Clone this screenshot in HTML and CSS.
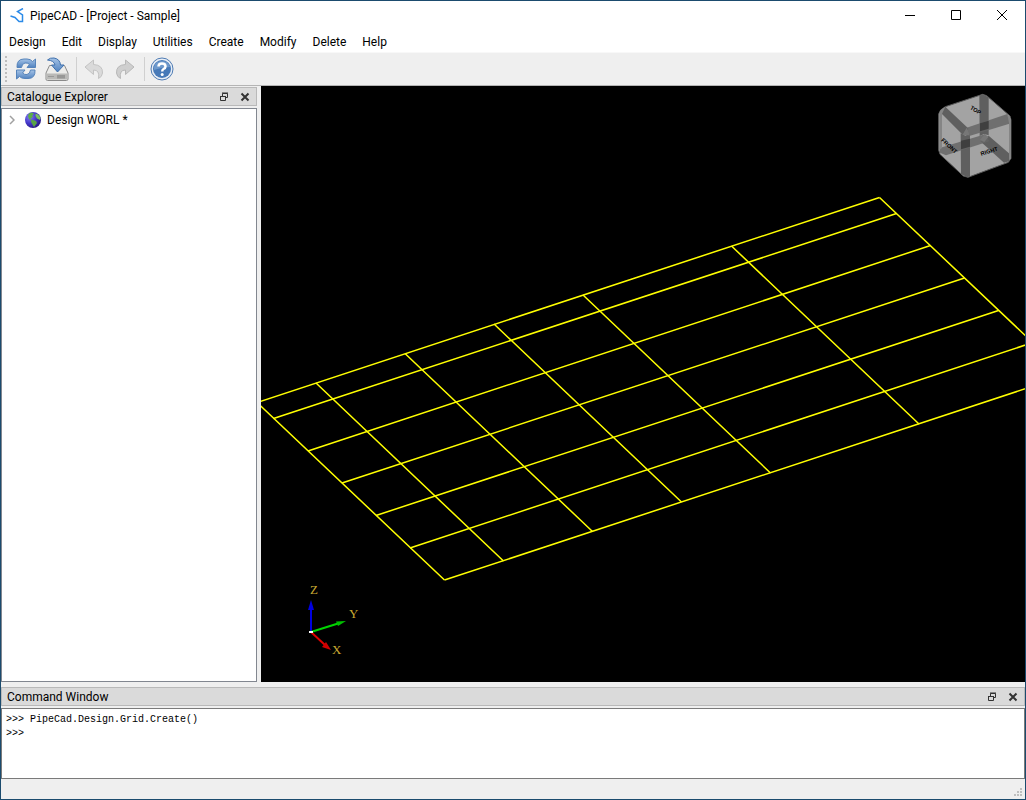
FILE: index.html
```html
<!DOCTYPE html>
<html lang="en">
  <head>
    <meta charset="utf-8" />
    <meta name="viewport" content="width=device-width, initial-scale=1" />
    <title>PipeCAD - [Project - Sample]</title>
    <link rel="stylesheet" href="styles.css">
  </head>
  <body>
    <div class="window">
      <header class="title-bar">
        <svg class="app-logo" width="16" height="16" viewBox="0 0 16 16">
          <path d="M14 0.500L8.500 3.500L13.500 7V13.500H10L6 9.500L1.500 8" fill="none" stroke="#2b8ae8" stroke-width="1.500" />
        </svg>
        <h1 class="title">PipeCAD - [Project - Sample]</h1>
        <button class="window-button" aria-label="Minimize">
          <svg width="12" height="12" viewBox="0 0 12 12"><path d="M1 5.500H11" /></svg>
        </button>
        <button class="window-button" aria-label="Maximize">
          <svg width="12" height="12" viewBox="0 0 12 12"><path d="M1.500 0.500H10.500V9.500H1.500Z" /></svg>
        </button>
        <button class="window-button" aria-label="Close">
          <svg width="12" height="12" viewBox="0 0 12 12"><path d="M1 0L11 10M11 0L1 10" /></svg>
        </button>
      </header>

      <nav class="menu-bar">
        <button>Design</button>
        <button>Edit</button>
        <button>Display</button>
        <button>Utilities</button>
        <button>Create</button>
        <button>Modify</button>
        <button>Delete</button>
        <button>Help</button>
      </nav>

      <div class="tool-bar">
        <span class="grip"></span>
        <button aria-label="Refresh">
          <svg width="24" height="24" viewBox="0 0 24 24">
            <defs>
              <linearGradient id="blue" x1="0" y1="0" x2="0" y2="1">
                <stop offset="0" stop-color="#a5c3e6" />
                <stop offset="1" stop-color="#4f81bf" />
              </linearGradient>
            </defs>
            <path d="M3 10.500Q2.500 2 10 2H13Q16.500 2 18.500 4.500L21.500 2V10.500H13L15.500 7.500Q13.500 5.500 11 6Q8 6.500 7.500 10.500Z" fill="url(#blue)" stroke="#5583ba" />
            <path d="M21 13Q21.500 21.500 14 21.500H11Q7.500 21.500 5.500 19.500L2.500 22V13H11L8.500 16Q10.500 18 13 17.500Q16 17 16.500 13Z" fill="url(#blue)" stroke="#5583ba" />
          </svg>
        </button>
        <button aria-label="Save">
          <svg width="24" height="24" viewBox="0 0 24 24">
            <path d="M4.500 8.500H19.500L23 16V22Q23 23.500 21.500 23.500H2.500Q1 23.500 1 22V16Z" fill="#ececea" stroke="#8a8a8a" />
            <path d="M1.500 16.500H22.500V22.500H1.500Z" fill="#b9b9b7" />
            <path d="M13 18V21.500M15 18V21.500M17 18V21.500M19 18V21.500" stroke="#777" />
            <path d="M3 19.500H9" stroke="#999" />
            <path d="M2.500 3Q5 0.500 9 1Q15 2 15.500 8H19L12.500 15L6.500 8H10Q9 3.500 2.500 3Z" fill="url(#blue)" stroke="#3f70ad" />
          </svg>
        </button>
        <span class="separator"></span>
        <button aria-label="Undo" disabled>
          <svg width="24" height="24" viewBox="0 0 24 24">
            <path d="M3 10L11.500 3V7.500Q21 8 20.500 16Q20 20 16.500 21.500Q18 13 11.500 13V17.500Z" fill="#dadada" stroke="#c3c3c3" />
          </svg>
        </button>
        <button aria-label="Redo" disabled>
          <svg width="24" height="24" viewBox="0 0 24 24">
            <path d="M21 10L12.500 3V7.500Q3 8 3.500 16Q4 20 7.500 21.500Q6 13 12.500 13V17.500Z" fill="#cfcfcf" stroke="#b8b8b8" />
          </svg>
        </button>
        <span class="separator"></span>
        <button aria-label="Help">
          <svg width="24" height="24" viewBox="0 0 24 24">
            <circle cx="12" cy="12" r="11" fill="#e8eef6" stroke="#4f7cb4" />
            <circle cx="12" cy="12" r="9" fill="#4679b8" />
            <path d="M4 10Q5 4 12 4Q19 4 20 10Q12 10 4 13Z" fill="#6e99cc" />
            <path d="M8.500 9.500Q8.500 6.500 12 6.500Q15.500 6.500 15.500 9.500Q15.500 11 13.500 12Q12.200 12.700 12.200 14.500" fill="none" stroke="#fff" stroke-width="2.500" />
            <circle cx="12.200" cy="17.500" r="1.500" fill="#fff" />
          </svg>
        </button>
      </div>

      <main class="workspace">
        <section class="dock explorer">
          <header class="dock-title">
            <h2>Catalogue Explorer</h2>
            <button aria-label="Float"><svg width="10" height="10" viewBox="0 0 10 10"><path d="M3.500 4V1.500H8.500V5.500H7M1.500 4.500H6.500V8.500H1.500ZM3 1H9M1 4.500H7" /></svg></button>
            <button aria-label="Close"><svg width="10" height="10" viewBox="0 0 10 10"><path class="cross" d="M1.500 1.500L8.500 8.500M8.500 1.500L1.500 8.500" /></svg></button>
          </header>
          <ul class="tree">
            <li>
              <button class="expander" aria-label="Expand">
                <svg width="6" height="10" viewBox="0 0 6 10"><path d="M1 1L5 5L1 9" fill="none" stroke="#a0a0a0" stroke-width="1.500" /></svg>
              </button>
              <svg width="16" height="16" viewBox="0 0 16 16">
                <defs>
                  <radialGradient id="globe" cx="0.300" cy="0.300" r="0.800">
                    <stop offset="0" stop-color="#8580ee" />
                    <stop offset="0.500" stop-color="#4638cc" />
                    <stop offset="1" stop-color="#24147a" />
                  </radialGradient>
                </defs>
                <circle cx="8" cy="8" r="8" fill="url(#globe)" />
                <path d="M4 1.500L7 0.500L9 2L7 3.500L8 5L5.500 6.500L6 8.500L4 7L3 4Z" fill="#5cae48" />
                <path d="M10.500 1.500L13 2.500L15.500 5.500L15 8L12 6.500L10.500 4Z" fill="#7cc060" />
                <path d="M6.500 7.500L11 9L12 11L9 15L7.500 12.500L6 10Z" fill="#58a345" />
              </svg>
              <span>Design WORL *</span>
            </li>
          </ul>
        </section>

        <section class="viewport" aria-label="3D view">
          <svg class="grid" width="764" height="596" viewBox="0 0 764 596">
            <path d="M-4 316.500L618.500 111.500M12.500 332.500L635.500 127.500M47 365L669.500 159.500M81 397L703.500 192M115 429.500L737.500 224.500M149 462L772 256.500M183.500 494L806 289" />
            <path d="M-4 316.500L183.500 494M55 297L242.500 475M144 267.500L331.500 445.500M233 238L420.500 416M322 209L509.500 387M470.500 160L658 338M618.500 111.500L806 289" />
          </svg>

          <svg class="view-cube" width="90" height="92" viewBox="0 0 270 276">
            <path d="M46 50L158 13L170 17L240 78L243 90V205L235 217L114 262L100 258L30 193L26 180V72L32 60Z" fill="#a3a3a3" stroke="#5a5a5a" stroke-width="3" />
            <g fill="#5f5f5f">
              <path d="M148 17L158 13L176 22V136L162 132L149 138Z" />
              <path d="M30 66L46 50L116 116L98 134Z" />
              <path d="M92 130L106 137L120 132V259L112 262L93 252Z" />
              <path d="M150 153L176 137L242 194L237 214L222 218Z" />
            </g>
            <g fill="#666" fill-opacity="0.850">
              <path d="M110 113L232 72L243 100L118 138L98 134Z" />
              <path d="M29 174L165 133L178 154L48 196L30 188Z" />
            </g>
            <path d="M150 100L176 92V116L150 124ZM93 152L120 146V170L93 178Z" fill="#3f3f3f" />
            <path d="M110 113L119 136L98 134ZM164 133L176 140L163 156L150 150Z" fill="#777" />
            <path d="M28 68L32 60L46 50L36 72V174L28 180ZM232 74L243 86V205L237 210V98Z" fill="#858585" />
            <g class="face-name">
              <text transform="translate(119 56) rotate(32)">TOP</text>
              <text transform="translate(32 152) rotate(42)">FRONT</text>
              <text transform="translate(154 197) rotate(-17)">RIGHT</text>
            </g>
          </svg>

          <svg class="axes" width="70" height="84" viewBox="0 0 70 84">
            <path d="M11 52V28" stroke="#0000e0" stroke-width="2" />
            <path d="M11 20L14 30H8Z" fill="#0000e0" />
            <path d="M11 52L38 43.500" stroke="#00d400" stroke-width="2" />
            <path d="M46 41L36 41.500L38 46Z" fill="#00c000" />
            <path d="M11 52L25 65" stroke="#e00000" stroke-width="2" />
            <path d="M31 70L26 62L22 67Z" fill="#d00000" />
            <path d="M9 51H13V53H9Z" fill="#fff" />
            <text x="10" y="14">Z</text>
            <text x="49" y="38">Y</text>
            <text x="32" y="74">X</text>
          </svg>
        </section>
      </main>

      <section class="dock command">
        <header class="dock-title">
          <h2><label for="console">Command Window</label></h2>
          <button aria-label="Float"><svg width="10" height="10" viewBox="0 0 10 10"><path d="M3.500 4V1.500H8.500V5.500H7M1.500 4.500H6.500V8.500H1.500ZM3 1H9M1 4.500H7" /></svg></button>
          <button aria-label="Close"><svg width="10" height="10" viewBox="0 0 10 10"><path class="cross" d="M1.500 1.500L8.500 8.500M8.500 1.500L1.500 8.500" /></svg></button>
        </header>
        <textarea id="console" class="console" spellcheck="false">&gt;&gt;&gt; PipeCad.Design.Grid.Create()
&gt;&gt;&gt; </textarea>
      </section>

      <footer class="status-bar">
        <svg width="8" height="8" viewBox="0 0 8 8"><path d="M6 0H8V2H6ZM3 3H5V5H3ZM6 3H8V5H6ZM0 6H2V8H0ZM3 6H5V8H3ZM6 6H8V8H6Z" fill="#bfbfbf" /></svg>
      </footer>
    </div>
  </body>
</html>
```

FILE: styles.css
```css
* {
  box-sizing: border-box;
}
body {
  margin: 0;
  font-family: Roboto, "Noto Sans", sans-serif;
  font-size: 12px;
  line-height: 16px;
  color: #000;
}
h1, h2 {
  margin: 0;
  font-size: 12px;
  font-weight: normal;
}
button {
  border: 0;
  padding: 0;
  background: none;
  font: inherit;
  color: inherit;
}
svg {
  display: block;
  flex: none;
}
.window {
  display: flex;
  flex-direction: column;
  height: 100vh;
  border: 1px solid #1b4b6e;
  background: #efefef;
}

/* Title bar and menus */
.title-bar {
  display: flex;
  align-items: center;
  height: 30px;
  padding-left: 8px;
  background: #fff;
}
.title {
  flex: 1;
  padding-left: 5px;
}
.window-button {
  display: flex;
  align-items: center;
  justify-content: center;
  width: 46px;
  height: 30px;
}
.window-button path {
  fill: none;
  stroke: #000;
}
.menu-bar {
  display: flex;
  height: 21px;
  background: #fff;
}
.menu-bar button {
  padding: 0 8px;
}

/* Toolbar */
.tool-bar {
  display: flex;
  align-items: center;
  height: 34px;
  padding-left: 4px;
  border-top: 1px solid #f8f8f8;
  border-bottom: 1px solid #b4b4b4;
}
.tool-bar button {
  width: 24px;
  margin: 0 4px 0 3px;
}
.grip {
  width: 2px;
  height: 26px;
  margin-right: 4px;
  background: repeating-linear-gradient(#bdbdbd 0 2px, transparent 2px 4px);
}
.separator {
  width: 1px;
  height: 24px;
  margin: 0 2px 0 3px;
  background: #d0d0d0;
}

/* Docks */
.workspace {
  display: flex;
  flex: 1;
  gap: 4px;
  min-height: 0;
}
.dock {
  display: flex;
  flex-direction: column;
  gap: 2px;
}
.explorer {
  width: 256px;
  padding-top: 1px;
}
.dock-title {
  display: flex;
  align-items: center;
  gap: 11px;
  height: 19px;
  padding: 1px 6px 0 5px;
  border: 1px solid #b9b9b9;
  background: #dadada;
}
.dock-title h2 {
  flex: 1;
}
.dock-title path {
  fill: none;
  stroke: #333;
}
.dock-title .cross {
  stroke-width: 2;
}
.tree {
  flex: 1;
  margin: 0;
  padding: 2px 7px;
  border: 1px solid #828790;
  background: #fff;
  list-style: none;
}
.tree li {
  display: flex;
  align-items: center;
  height: 18px;
}
.expander {
  margin-right: 10px;
}
.tree span {
  padding-left: 6px;
}

/* 3D view */
.viewport {
  position: relative;
  flex: 1;
  overflow: hidden;
  background: #000;
}
.grid path {
  fill: none;
  stroke: #ff0;
  stroke-width: 1.5;
}
.view-cube {
  position: absolute;
  top: 4px;
  right: 5px;
}
.face-name {
  font: bold 17px "Liberation Sans", sans-serif;
}
.axes {
  position: absolute;
  left: 39px;
  bottom: 18px;
}
.axes text {
  font: 13px "Liberation Serif", serif;
  fill: #c8a832;
}

/* Command window */
.command {
  padding-top: 5px;
}
.console {
  height: 71px;
  padding: 4px;
  border: 1px solid #7a7a7a;
  background: #fff;
  color: #000;
  font: 10px/14px "Liberation Mono", monospace;
  resize: none;
  outline: none;
}
.status-bar {
  display: flex;
  align-items: flex-end;
  justify-content: flex-end;
  height: 20px;
  padding: 3px;
}
```
